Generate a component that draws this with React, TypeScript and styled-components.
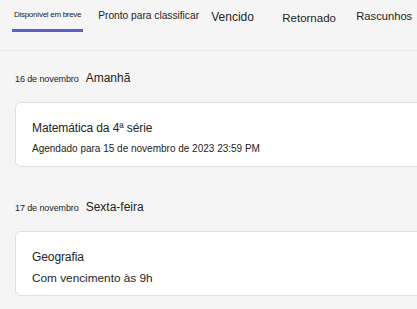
import React from "react";
import styled, { createGlobalStyle } from "styled-components";

const GlobalStyle = createGlobalStyle`
  html, body {
    margin: 0;
    padding: 0;
    background: #f5f5f5;
    overflow: hidden;
  }
  body {
    font-family: "Liberation Sans", Arial, sans-serif;
    color: #242424;
  }
`;

type TabProps = {
  $width?: number;
  $size: number;
  $active?: boolean;
  $offset?: number;
  $gapAfter?: number;
};

const Page = styled.div`
  width: 417px;
  height: 309px;
  overflow: hidden;
`;

const TabBar = styled.nav`
  display: flex;
  align-items: flex-start;
  height: 51px;
  padding-left: 12px;
  border-bottom: 1px solid #e6e6e6;
  box-sizing: border-box;
`;

const Tab = styled.div<TabProps>`
  flex: 0 0 ${(p) => (p.$width ? `${p.$width}px` : "auto")};
  margin-right: ${(p) => p.$gapAfter ?? 0}px;
  padding: ${(p) => (p.$active ? "0 2px" : "0")};
  box-sizing: border-box;
  height: 32px;
  display: flex;
  align-items: center;
  padding-top: ${(p) => p.$offset ?? 0}px;
  font-size: ${(p) => p.$size}px;
  letter-spacing: ${(p) => (p.$size < 9 ? "-0.3px" : "0")};
  white-space: nowrap;
  color: #242424;
  border-bottom: 3px solid ${(p) => (p.$active ? "#5b5fc7" : "transparent")};
`;

const Section = styled.section`
  padding-left: 15px;
`;

const DateRow = styled.div<{ $top: number }>`
  display: flex;
  align-items: baseline;
  gap: 7px;
  padding-top: ${(p) => p.$top}px;
  height: 20px;
`;

const DayLabel = styled.span`
  font-size: 9px;
  letter-spacing: -0.1px;
`;

const DayName = styled.span`
  font-size: 12px;
`;

const Card = styled.div`
  margin-top: 11px;
  margin-right: -30px;
  height: 65px;
  box-sizing: border-box;
  background: #ffffff;
  border: 1px solid #e0e0e0;
  border-radius: 6px;
  padding: 17px 16px 0;
  display: flex;
  flex-direction: column;
  gap: 5px;
`;

const Title = styled.div`
  font-size: 12px;
  letter-spacing: -0.1px;
  line-height: 16px;
`;

const Meta = styled.div<{ $size: number }>`
  font-size: ${(p) => p.$size}px;
  line-height: 16px;
`;

const tabs = [
  { label: "Disponível em breve", width: 70, size: 8, active: true, offset: 0, gapAfter: 15 },
  { label: "Pronto para classificar", width: 113, size: 10.2, offset: 1 },
  { label: "Vencido", width: 71, size: 12, offset: 4 },
  { label: "Retornado", width: 74, size: 11.5, offset: 6 },
  { label: "Rascunhos", size: 11.2, offset: 3 },
];

const groups = [
  {
    day: "16 de novembro",
    name: "Amanhã",
    top: 20,
    title: "Matemática da 4ª série",
    meta: "Agendado para 15 de novembro de 2023 23:59 PM",
    metaSize: 10,
  },
  {
    day: "17 de novembro",
    name: "Sexta-feira",
    top: 33,
    title: "Geografia",
    meta: "Com vencimento às 9h",
    metaSize: 11.8,
  },
];

export default function App() {
  return (
    <Page>
      <GlobalStyle />
      <TabBar>
        {tabs.map((t) => (
          <Tab
            key={t.label}
            $width={t.width}
            $size={t.size}
            $active={t.active}
            $offset={t.offset}
            $gapAfter={t.gapAfter}
          >
            {t.label}
          </Tab>
        ))}
      </TabBar>
      <Section>
        {groups.map((g) => (
          <div key={g.day}>
            <DateRow $top={g.top}>
              <DayLabel>{g.day}</DayLabel>
              <DayName>{g.name}</DayName>
            </DateRow>
            <Card>
              <Title>{g.title}</Title>
              <Meta $size={g.metaSize}>{g.meta}</Meta>
            </Card>
          </div>
        ))}
      </Section>
    </Page>
  );
}
